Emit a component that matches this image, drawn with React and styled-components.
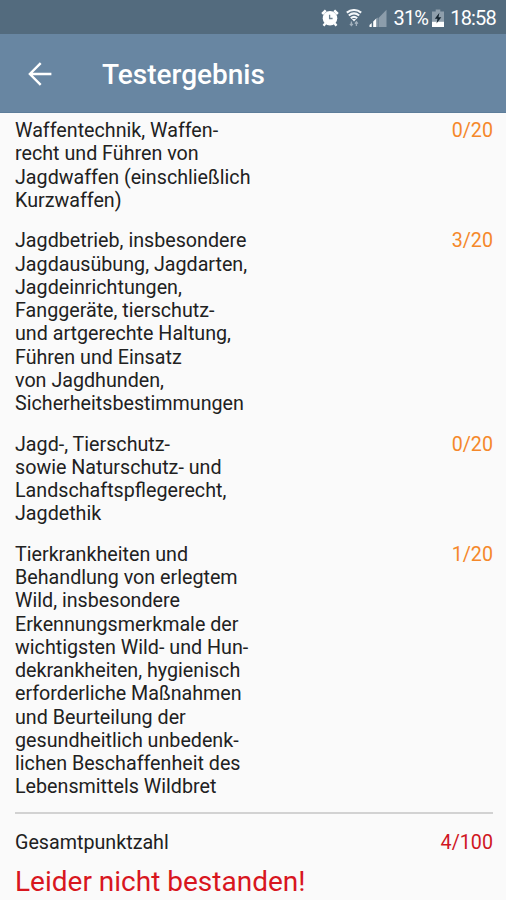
import React from "react";
import styled, { createGlobalStyle } from "styled-components";

const GlobalStyle = createGlobalStyle`
  * {
    box-sizing: border-box;
  }
  body {
    margin: 0;
    background: #fafafa;
    font-family: Roboto, "Noto Sans", sans-serif;
  }
`;

const results = [
  {
    points: "0/20",
    lines: [
      "Waffentechnik, Waffen-",
      "recht und Führen von",
      "Jagdwaffen (einschließlich",
      "Kurzwaffen)",
    ],
  },
  {
    points: "3/20",
    lines: [
      "Jagdbetrieb, insbesondere",
      "Jagdausübung, Jagdarten,",
      "Jagdeinrichtungen,",
      "Fanggeräte, tierschutz-",
      "und artgerechte Haltung,",
      "Führen und Einsatz",
      "von Jagdhunden,",
      "Sicherheitsbestimmungen",
    ],
  },
  {
    points: "0/20",
    lines: [
      "Jagd-, Tierschutz-",
      "sowie Naturschutz- und",
      "Landschaftspflegerecht,",
      "Jagdethik",
    ],
  },
  {
    points: "1/20",
    lines: [
      "Tierkrankheiten und",
      "Behandlung von erlegtem",
      "Wild, insbesondere",
      "Erkennungsmerkmale der",
      "wichtigsten Wild- und Hun-",
      "dekrankheiten, hygienisch",
      "erforderliche Maßnahmen",
      "und Beurteilung der",
      "gesundheitlich unbedenk-",
      "lichen Beschaffenheit des",
      "Lebensmittels Wildbret",
    ],
  },
];

function AlarmIcon() {
  return (
    <svg width="18" height="18" viewBox="0 0 18 18">
      <circle cx="9" cy="9.3" r="7.3" fill="#fff" />
      <path d="M1.200 5 4.800 1.400M16.800 5 13.200 1.400" stroke="#fff" strokeWidth="2.600" />
      <path d="M4.200 14.500 2.600 16.800M13.800 14.500l1.600 2.300" stroke="#fff" strokeWidth="2.400" />
      <path d="M8.600 5.800v3.700h3" fill="none" stroke="#6d8292" strokeWidth="1.300" />
    </svg>
  );
}

function WifiIcon() {
  return (
    <svg width="16" height="18" viewBox="0 0 16 18" fill="none" stroke="#f4f7f9">
      <path d="M.8 3.700Q8-1.600 15.200 3.700" strokeWidth="2.100" />
      <path d="M2.800 6.500Q8 2.200 13.200 6.500" strokeWidth="2.100" />
      <path d="M4.800 9.200Q8 6.400 11.200 9.200" strokeWidth="2.100" />
      <path d="M5.800 10h4.400L8 12.400z" fill="#f4f7f9" stroke="none" />
      <path d="M5.400 12.400v4M3.900 14.800l1.500 1.800 1.500-1.800" stroke="#a3b1bd" strokeWidth="1.300" />
      <path d="M10.400 17v-4M8.900 14.600l1.500-1.800 1.500 1.800" stroke="#a3b1bd" strokeWidth="1.300" />
    </svg>
  );
}

function SignalIcon() {
  return (
    <svg width="18" height="18" viewBox="0 0 18 18">
      <path d="M9.500 9 17.500.8V18h-8z" fill="#8c9dab" />
      <path d="M.5 18v-2l2.200-2V18zM4.200 18v-5.500l3-3V18z" fill="#fff" />
      <path d="M7.200 18V9.800l1.400-1.200V18z" fill="#9dabb7" />
    </svg>
  );
}

function BatteryIcon() {
  return (
    <svg width="12" height="18" viewBox="0 0 12 18">
      <path d="M3.700.5h4.600v2H12V18H0V2.500h3.700z" fill="#8f9fac" />
      <path d="M0 12.800h12V18H0z" fill="#fff" />
      <path d="M7.400 3.800 2.800 9.800h2.700L4.500 14.600l4.800-6.300H6.500z" fill="#152530" />
    </svg>
  );
}

export default function App() {
  return (
    <Screen>
      <GlobalStyle />
      <StatusBar>
        <StatusIcons>
          <AlarmIcon />
          <WifiIcon />
          <SignalIcon />
        </StatusIcons>
        <StatusText>31%</StatusText>
        <BatteryIcon />
        <StatusText>18:58</StatusText>
      </StatusBar>
      <Toolbar>
        <BackButton aria-label="Zurück">
          <svg width="24" height="24" viewBox="0 0 24 24" fill="none" stroke="#fff" strokeWidth="2.4">
            <path d="M12.700 1.200 1.900 12l10.800 10.800M2 12h21.400" />
          </svg>
        </BackButton>
        <Title>Testergebnis</Title>
      </Toolbar>
      <Content>
        {results.map((result) => (
          <Row key={result.lines[0]}>
            <Subject>{result.lines.join("\n")}</Subject>
            <Points>{result.points}</Points>
          </Row>
        ))}
        <Divider />
        <Row>
          <Subject>Gesamtpunktzahl</Subject>
          <Points $failed>4/100</Points>
        </Row>
        <Verdict>Leider nicht bestanden!</Verdict>
      </Content>
    </Screen>
  );
}

const Screen = styled.div`
  display: flex;
  flex-direction: column;
  height: 900px;
  overflow: hidden;
  background: #fafafa;
`;

const StatusBar = styled.header`
  display: flex;
  flex: none;
  align-items: center;
  justify-content: flex-end;
  height: 34px;
  padding: 2px 10px 0 0;
  gap: 4px;
  background: #536b7e;
  svg {
    flex: none;
  }
`;

const StatusIcons = styled.div`
  display: flex;
  gap: 7px;
  margin-right: 2px;
`;

const StatusText = styled.span`
  color: #fff;
  font-size: 20px;
  line-height: 22px;
  letter-spacing: -0.8px;
  white-space: nowrap;
  &:last-child {
    margin-left: 2px;
  }
`;

const Toolbar = styled.div`
  display: flex;
  flex: none;
  align-items: center;
  height: 79px;
  padding-left: 28px;
  background: #6886a2;
  border-bottom: 1px solid #5d7d9a;
`;

const BackButton = styled.button`
  display: flex;
  margin-top: 1px;
  padding: 0;
  border: 0;
  background: none;
`;

const Title = styled.h1`
  margin: 4px 0 0 50px;
  color: #fff;
  font-size: 28px;
  font-weight: 500;
  line-height: 34px;
`;

const Content = styled.main`
  display: flex;
  flex-direction: column;
  padding: 6px 13px 0 15px;
`;

const Row = styled.div`
  display: flex;
  justify-content: space-between;
  margin-bottom: 17.3px;
  font-size: 19.7px;
  line-height: 23.25px;
`;

const Subject = styled.div`
  color: #212121;
  white-space: pre;
`;

const Points = styled.div`
  color: ${(props) => (props.$failed ? "#d0161f" : "#f5882a")};
`;

const Divider = styled.hr`
  width: 100%;
  height: 2px;
  margin: -4px 0 17px;
  border: 0;
  background: #d2d2d2;
`;

const Verdict = styled.div`
  margin-top: -6px;
  color: #d8161e;
  font-size: 28px;
  line-height: 33px;
`;
